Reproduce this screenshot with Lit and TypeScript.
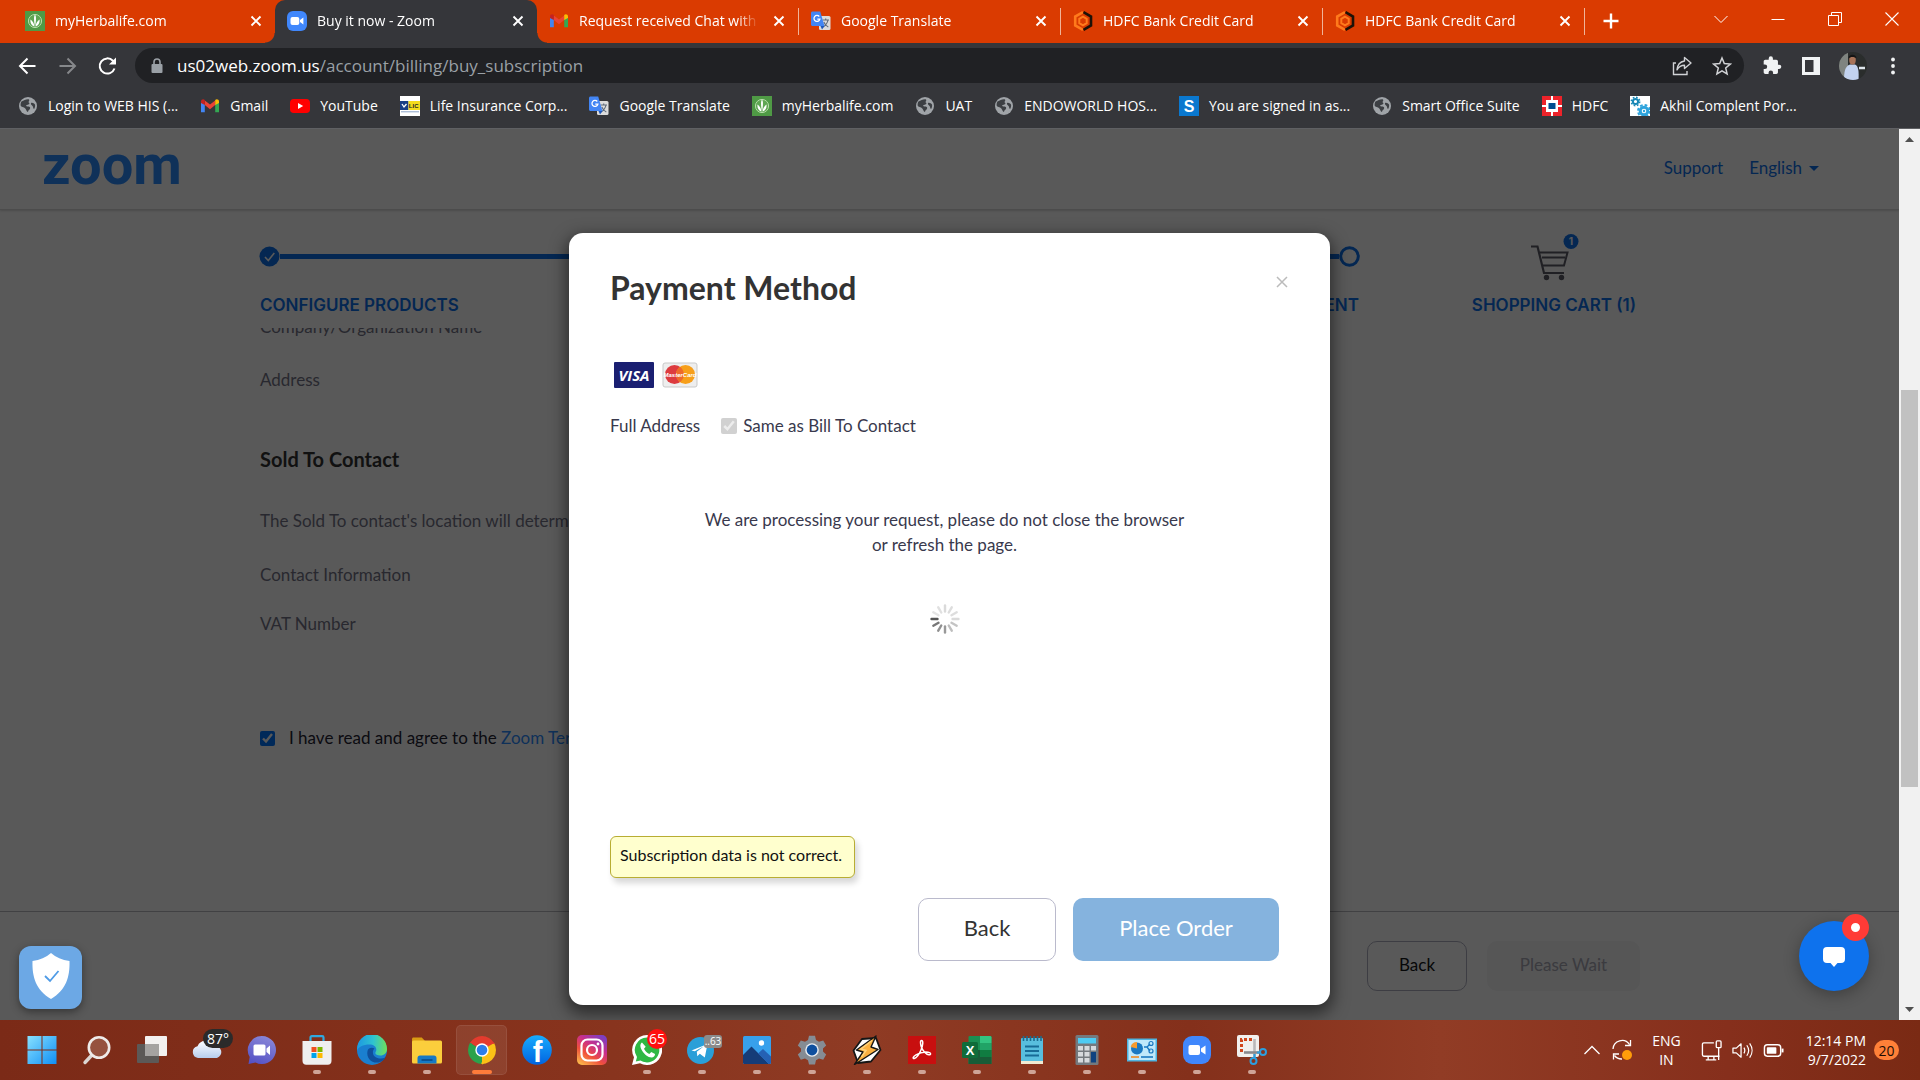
import { LitElement, html, svg, css, TemplateResult, SVGTemplateResult } from "lit";
import { customElement } from "lit/decorators.js";
import { classMap } from "lit/directives/class-map.js";

type Icon = TemplateResult | SVGTemplateResult;

const icon = (size: number, box: string, body: SVGTemplateResult): TemplateResult =>
  html`<svg width=${size} height=${size} viewBox=${box} fill="none" aria-hidden="true">${body}</svg>`;

/* ---------- site icons ---------- */

const herbalife = () => icon(20, "0 0 20 20", svg`
  <rect width="20" height="20" fill="#4f9a45"/>
  <circle cx="10" cy="10" r="6.600" fill="#5fa653" stroke="#b5dba8" stroke-width="1"/>
  <path d="M10 3.500c1.300 2 1.300 5 0 12.500c-1.300-7.500-1.300-10.500 0-12.500z" fill="#fff"/>
  <path d="M9.400 15.500C6.500 14.500 5 11.500 5.500 8.500C7.500 9.800 9 12 9.400 15.500zM10.600 15.500c2.900-1 4.400-4 3.900-7c-2 1.300-3.500 3.500-3.900 7z" fill="#fff"/>`);

const zoomCam = () => icon(20, "0 0 20 20", svg`
  <rect width="20" height="20" rx="6" fill="#4087fc"/>
  <rect x="3.500" y="6" width="8.800" height="8" rx="2" fill="#fff"/>
  <path d="M13 9l3.400-2.600v7.200L13 11z" fill="#fff"/>`);

const gmail = () => icon(20, "0 0 20 20", svg`
  <path d="M1 5v11.300h3.800V8.300z" fill="#4285f4"/>
  <path d="M19 5v11.300h-3.800V8.300z" fill="#34a853"/>
  <path d="M4.800 4.500L10 8.600l5.200-4.100v4.600L10 13.200L4.800 9.100z" fill="#ea4335"/>
  <path d="M1 5.600c0-2.200 2.300-3 3.800-1.700v5.200L1 6.900z" fill="#c5221f"/>
  <path d="M19 5.600c0-2.200-2.300-3-3.800-1.700v5.200L19 6.900z" fill="#fbbc04"/>`);

const translate = () => icon(20, "0 0 20 20", svg`
  <rect x="8" y="5" width="11.500" height="14" rx="1.500" fill="#dcdcdc"/>
  <path d="M11.500 9h6.500M14.700 7.500V9M17 9c-.6 3-2.500 5.500-5 7M12.800 11c.8 2 2.500 4 4.500 5" stroke="#5f6b7a" stroke-width="1.100"/>
  <path d="M1.500.5h7.700L13.500 15H1.500C.7 15 0 14.300 0 13.500V2C0 1.200.7.5 1.500.5z" fill="#4285f4"/>
  <path d="M9.500 15h4l-2.500 3.500z" fill="#1f57b8"/>
  <path d="M8.300 5.500A3 3 0 1 0 8.900 8.100H6.300" stroke="#fff" stroke-width="1.300"/>`);

const hexagon = () => icon(20, "0 0 20 20", svg`
  <path d="M10 1.200L2.200 5.500v9L10 18.800" stroke="#ff7a1c" stroke-width="2.600"/>
  <path d="M10.500 1.200L18 5.500v9l-7.500 4.300" stroke="#1d1208" stroke-width="2.600"/>
  <path d="M10 5.600L6.300 7.800v4.400l3.700 2.200l3.700-2.200V7.800z" stroke="#ff7a1c" stroke-width="2"/>`);

const globe = () => icon(20, "0 0 20 20", svg`
  <circle cx="10" cy="10" r="9" fill="#a0a4a8"/>
  <path d="M3.500 5.500C6 4.500 8 3 11 3.400c1 1.200-.8 2-.4 3.200c1.800.8.400 2.300-1.600 2.400c-1.500.1-1 1.500.5 1.500c2 0 3 .5 2.600 2c-.5 1.500-1.900 1.500-2.100 3.500c-1.600-.5-1.600-2.500-2.700-3.600C6 11 3 11 2.600 9.500c0-1.500.2-3 .9-4zM13 7c1.500-.6 3 .2 4 1.500c.4 1.700 0 3-.9 4.500c-1.300-.6-.6-2-1.600-3c-.8-.8-2-1.800-1.500-3z" fill="#3c3f43"/>`);

const youtube = () => icon(20, "0 0 20 20", svg`
  <rect x="0" y="3" width="20" height="14" rx="3.800" fill="#f00"/>
  <path d="M8 7l5.200 3L8 13z" fill="#fff"/>`);

const lic = () => icon(20, "0 0 20 20", svg`
  <rect width="20" height="20" fill="#fff"/>
  <rect y="5" width="8.500" height="9" fill="#1a3f86"/>
  <path d="M2 8l2 3l2.500-3" stroke="#fff" stroke-width="1.300"/>
  <rect x="8.500" y="5" width="11.500" height="9" fill="#f4dc1c"/>
  <text x="8.800" y="12" font-size="6" font-weight="700" font-family="Liberation Sans, sans-serif" fill="#222">LIC</text>
  <path d="M1 15.800h18" stroke="#8aa3c8" stroke-width="1"/>`);

const blueS = () => icon(20, "0 0 20 20", svg`
  <rect width="20" height="20" fill="#0a78cf"/>
  <text x="10" y="15.600" text-anchor="middle" font-size="16" font-weight="700" font-family="Liberation Sans, sans-serif" fill="#fff">S</text>`);

const hdfc = () => icon(20, "0 0 20 20", svg`
  <rect width="20" height="20" fill="#ed232a"/>
  <path d="M0 10h20M10 0v20" stroke="#fff" stroke-width="2"/>
  <rect x="4" y="4" width="12" height="12" fill="#fff"/>
  <rect x="6.500" y="7" width="7" height="6" fill="#004c8f"/>`);

const gears = () => icon(20, "0 0 20 20", svg`
  <rect width="20" height="20" fill="#fff"/>
  <circle cx="5.500" cy="5.500" r="2.600" stroke="#1787b5" stroke-width="2"/>
  <circle cx="5.500" cy="5.500" r="4.200" stroke="#1787b5" stroke-width="1.500" stroke-dasharray="1.700 1.600"/>
  <circle cx="14" cy="15" r="3.800" stroke="#2ea3dc" stroke-width="3"/>
  <circle cx="14" cy="15" r="6" stroke="#2ea3dc" stroke-width="2" stroke-dasharray="2.700 2"/>
  <circle cx="14" cy="15" r="1.200" fill="#2ea3dc"/>`);

/* ---------- taskbar icons ---------- */

const winLogo = () => icon(30, "0 0 30 30", svg`
  <defs><linearGradient id="win" x1="0" y1="0" x2="30" y2="30" gradientUnits="userSpaceOnUse">
    <stop stop-color="#8be3ff"/><stop offset="1" stop-color="#0c8cf5"/></linearGradient></defs>
  <path d="M.5 1h14v13.500H.5zM15.500 1h14v13.500h-14zM.5 15.500h14V29H.5zM15.500 15.500h14V29h-14z" fill="url(#win)"/>`);

const search = () => icon(30, "0 0 30 30", svg`
  <path d="M9.500 20.500L3 27.500" stroke="#dcd6d3" stroke-width="3.400" stroke-linecap="round"/>
  <circle cx="17" cy="12.500" r="10.200" fill="#96523f" stroke="#efebe9" stroke-width="2.600"/>`);

const taskView = () => icon(30, "0 0 30 30", svg`
  <rect x="8" y="1" width="22" height="20" rx="1" fill="#f3f1f0"/>
  <rect x="0" y="9" width="22" height="19" rx="1" fill="#5c5957"/>
  <rect x="8" y="9" width="14" height="12" fill="#a5a3a1"/>`);

const weather = () => icon(30, "0 0 30 30", svg`
  <defs><linearGradient id="cloud" x1="0" y1="8" x2="0" y2="24" gradientUnits="userSpaceOnUse">
    <stop stop-color="#f4f8ff"/><stop offset="1" stop-color="#b3c9ea"/></linearGradient></defs>
  <path d="M6 23a6 6 0 0 1-.5-11.800A9 9 0 0 1 22 11a6.200 6.200 0 0 1 3 12z" fill="url(#cloud)"/>`);

const teamsChat = () => icon(30, "0 0 30 30", svg`
  <defs><linearGradient id="chatBg" x1="20" y1="0" x2="8" y2="30" gradientUnits="userSpaceOnUse">
    <stop stop-color="#8a88d8"/><stop offset="1" stop-color="#5450c4"/></linearGradient></defs>
  <path d="M15 1a14 14 0 1 1-6.500 26.400L1.500 29l1.200-7A14 14 0 0 1 15 1z" fill="url(#chatBg)"/>
  <rect x="6.500" y="9.500" width="12" height="11" rx="1.500" fill="#fff"/>
  <path d="M19.500 13.500l3.500-3v9.500l-3.500-3z" fill="#fff"/>`);

const store = () => icon(30, "0 0 30 30", svg`
  <path d="M8.500 7V2.500c0-.8.5-1.300 1.300-1.300h10.400c.8 0 1.300.5 1.300 1.300V7" stroke="#2fa9df" stroke-width="2.200"/>
  <path d="M.5 6h29v20c0 2.200-1.500 3.700-3.700 3.700H4.200C2 29.700.5 28.200.5 26z" fill="#efefef"/>
  <path d="M9.500 12h5v5h-5z" fill="#f05022"/><path d="M15.500 12h5v5h-5z" fill="#7db700"/>
  <path d="M9.500 18h5v5h-5z" fill="#00a3ee"/><path d="M15.500 18h5v5h-5z" fill="#fdb900"/>`);

const edge = () => icon(30, "0 0 30 30", svg`
  <defs><linearGradient id="edgeTop" x1="2" y1="10" x2="30" y2="12" gradientUnits="userSpaceOnUse">
    <stop stop-color="#1f9de0"/><stop offset=".5" stop-color="#2fc3cf"/><stop offset="1" stop-color="#6fe05a"/></linearGradient></defs>
  <circle cx="15" cy="15" r="15" fill="#1a7fd0"/>
  <path d="M0 14A15 15 0 0 1 30 14c0 4-3 6.500-6.700 6.500c-3 0-5-1-5-2.500c0-1 1-1.600 1-3.500c0-3-3-5-6.800-5C6 9.500 1 12 0 16z" fill="url(#edgeTop)"/>
  <path d="M10.500 16c-1.500 7 4 12.500 11 11.500c3-.5 5.500-2.500 7-5c-5 2.500-11.500.5-12.500-4c-.5-2.500.5-4 1.500-5c-3-1.500-6.300-.5-7 2.500z" fill="#0f4f9c"/>`);

const explorer = () => icon(30, "0 0 30 30", svg`
  <path d="M0 4c0-1 .6-1.600 1.500-1.600h8.300L13 6v5H0z" fill="#d99b13"/>
  <rect y="5.500" width="30" height="23" rx="1.500" fill="#fbce3c"/>
  <path d="M5.500 28.500V23c0-1.500 1-2.500 2.500-2.500h14c1.500 0 2.500 1 2.500 2.500v5.500z" fill="#1679c5"/>
  <path d="M9.500 25h11" stroke="#0b4f8e" stroke-width="1.800"/>`);

const chrome = () => icon(30, "0 0 30 30", svg`
  <path d="M15 15L2.900 8A14 14 0 0 1 27.100 8z" fill="#e33b2e"/>
  <path d="M15 15L27.100 8A14 14 0 0 1 15 29z" fill="#fbc116"/>
  <path d="M15 15v14A14 14 0 0 1 2.900 8z" fill="#2ba24c"/>
  <path d="M15 8.300h12.300" stroke="#e33b2e" stroke-width="1"/>
  <path d="M20.800 18.500L15 29" stroke="#fbc116" stroke-width="2"/>
  <path d="M9.200 18.300L3.400 8.500" stroke="#2ba24c" stroke-width="2"/>
  <circle cx="15" cy="15" r="6.700" fill="#fff"/><circle cx="15" cy="15" r="5.300" fill="#2b7de9"/>`);

const facebook = () => icon(30, "0 0 30 30", svg`
  <defs><linearGradient id="fb" x1="0" y1="0" x2="0" y2="30" gradientUnits="userSpaceOnUse">
    <stop stop-color="#18acfe"/><stop offset="1" stop-color="#0163e0"/></linearGradient></defs>
  <circle cx="15" cy="15" r="14.800" fill="url(#fb)"/>
  <text x="15.500" y="27" text-anchor="middle" font-size="29" font-weight="700" font-family="Liberation Sans, sans-serif" fill="#fff">f</text>`);

const instagram = () => icon(30, "0 0 30 30", svg`
  <defs><linearGradient id="ig" x1="4" y1="30" x2="24" y2="0" gradientUnits="userSpaceOnUse">
    <stop stop-color="#fdbb4b"/><stop offset=".35" stop-color="#f0503c"/><stop offset=".65" stop-color="#c92f8b"/><stop offset="1" stop-color="#7a3fc4"/></linearGradient></defs>
  <rect width="30" height="30" rx="5" fill="url(#ig)"/>
  <rect x="4.500" y="4.500" width="21" height="21" rx="6" stroke="#fff" stroke-width="2.200"/>
  <circle cx="15" cy="15" r="5" stroke="#fff" stroke-width="2.200"/><circle cx="21" cy="9" r="1.400" fill="#fff"/>`);

const whatsapp = () => icon(30, "0 0 30 30", svg`
  <path d="M15 0a15 15 0 1 1-7 28.200L0 30l2-7.700A15 15 0 0 1 15 0z" fill="#fff"/>
  <path d="M15 2.600A12.400 12.400 0 1 1 8.500 25.600L3.800 26.600L5 22A12.400 12.400 0 0 1 15 2.600z" fill="#2fb843"/>
  <path d="M10 7.500c-2 1.500-2.300 4 0 8c2.500 4 6 7 9.500 7c2 0 3.500-1.500 3.500-3.500l-3.700-2l-2 2c-2.500-1-4.300-3-5.300-5.200l1.700-2z" fill="#fff"/>`);

const telegram = () => icon(30, "0 0 30 30", svg`
  <circle cx="13.500" cy="15.500" r="13.500" fill="#2a9fd8"/>
  <path d="M4.500 15.500L20.500 9l-2.700 13.500l-5-3.700l-2.500 2.500l-.5-4.500l7-5.500l-9 5z" fill="#fff"/>`);

const photos = () => icon(30, "0 0 30 30", svg`
  <rect x="1" y="1" width="28" height="28" rx="1.500" fill="#37a0ec"/>
  <path d="M1 20L9.500 11.500L27 29H2.500C1.600 29 1 28.400 1 27.500z" fill="#153c78"/>
  <path d="M16 18.500l5-4.500l8 7.500v6c0 .9-.6 1.500-1.500 1.500H27z" fill="#2561b4"/>
  <circle cx="19.500" cy="8" r="2.700" fill="#fff"/>`);

const settings = () => icon(30, "0 0 30 30", svg`
  <path d="M12 .8h6l1 4.200l3 1.700l4.200-1.300l3 5.200l-3.200 3v3l3.200 3l-3 5.200l-4.200-1.300l-3 1.700l-1 4.200h-6l-1-4.200l-3-1.700l-4.200 1.300l-3-5.200l3.200-3v-3l-3.200-3l3-5.200L8 6.700L11 5z" fill="#858c94"/>
  <circle cx="15" cy="15" r="6.800" fill="#e9edf1"/><circle cx="15" cy="15" r="5.400" fill="#0e4f9e"/>`);

const winamp = () => icon(30, "0 0 30 30", svg`
  <path d="M10 4l14-1l4.500 12L19 26.500L6 28L1.500 15.500z" fill="#fff" stroke="#161616" stroke-width="1.800" stroke-linejoin="round"/>
  <path d="M24 1L4.500 15l6.500 2L2.500 29.500L26 14.500l-7-2.500z" fill="#fbb040" stroke="#161616" stroke-width="1.400" stroke-linejoin="round"/>
  <path d="M20 5.500L9 14l5 1.500L9.500 22" stroke="#fdd27c" stroke-width="1.500"/>`);

const acrobat = () => icon(30, "0 0 30 30", svg`
  <rect x="1" y="1" width="28" height="28" fill="#c80f0f"/>
  <path d="M14.500 5.500c2 0 1.500 5-.5 9.500c-1.700 4-4.700 8-6.700 8.500c-2 .3-1.300-2 1.700-3.700c3.500-2 8.500-3 12-2.600c3.500.5 3.200 2.800.8 2.600c-3-.3-6.300-4.300-7.500-8c-.8-2.500-1.300-6.300.2-6.300z" stroke="#fff" stroke-width="1.500"/>`);

const excel = () => icon(30, "0 0 30 30", svg`
  <rect x="6.500" y="1" width="23" height="28" rx="1" fill="#1a8f52"/>
  <path d="M18 1h10.500l1 1v6H18z" fill="#33c481"/><path d="M18 8h11.500v7H18z" fill="#21a366"/>
  <path d="M18 15h11.500v7H18z" fill="#107c41"/><path d="M6.500 15H18v14H6.500z" fill="#185c37"/><path d="M18 22h11.500v7H18z" fill="#185c37"/>
  <rect x="0" y="7" width="16" height="16" rx="1.500" fill="#0f6c3a"/>
  <text x="8" y="19.500" text-anchor="middle" font-size="13" font-weight="700" font-family="Liberation Sans, sans-serif" fill="#fff">X</text>`);

const notepad = () => icon(30, "0 0 30 30", svg`
  <rect x="4" y="3" width="22" height="26" rx="1" fill="#58bede"/><rect x="4" y="26" width="22" height="3" fill="#f2ead2"/>
  <path d="M6.500 1v5M10 1v5M13.500 1v5M17 1v5M20.500 1v5M24 1v5" stroke="#1c6c8f" stroke-width="1.600"/>
  <path d="M8 11.500h14M8 16h14M8 20.500h14" stroke="#176b96" stroke-width="2"/>`);

const calculator = () => icon(30, "0 0 30 30", svg`
  <rect x="3.500" y="0" width="23" height="30" rx="1.500" fill="#74797e"/>
  <rect x="6" y="3" width="18" height="5.500" fill="#4ecbf3"/>
  <path d="M6 11h5v4.500H6zM12.500 11h5v4.500h-5zM19 11h5v4.500h-5zM6 17h5v4.500H6zM12.500 17h5v4.500h-5zM6 23h5v4.500H6zM12.500 23h5v4.500h-5z" fill="#d6d9dc"/>
  <path d="M19 17h5v10.500h-5z" fill="#10427f"/>`);

const controlPanel = () => icon(30, "0 0 30 30", svg`
  <rect x="0" y="3.500" width="30" height="23" fill="#4fb4e0"/><rect x="1.500" y="5" width="27" height="20" fill="#bfe8fb"/>
  <circle cx="10" cy="13.500" r="6" fill="#1a78c2"/><path d="M10 13.500V7a6.500 6.500 0 0 0-6.300 5z" fill="#f79b2e"/>
  <path d="M17 12h3l3-3M20 12l3 4" stroke="#1a78c2" stroke-width="1.300"/>
  <circle cx="24" cy="8.500" r="2" stroke="#1a78c2" stroke-width="1.200"/><circle cx="24" cy="16" r="2" stroke="#1a78c2" stroke-width="1.200"/>
  <path d="M4 22h8" stroke="#f08a24" stroke-width="1.600"/><path d="M14 22h12" stroke="#1a78c2" stroke-width="1.600"/>`);

const zoomApp = () => icon(30, "0 0 30 30", svg`
  <rect x="1" y="1" width="28" height="28" rx="9" fill="#4087fc"/>
  <rect x="6.500" y="10" width="11.500" height="10" rx="2" fill="#fff"/><path d="M19 13.500l4.500-3v9l-4.500-3z" fill="#fff"/>`);

const snip = () => icon(30, "0 0 30 30", svg`
  <rect x="0" y="0" width="22" height="22" rx="2" fill="#f1f0ee"/>
  <path d="M4.500 17V4.500H17" stroke="#d0451b" stroke-width="3" stroke-dasharray="3 2"/>
  <path d="M17.500 4v18" stroke="#b9b9bb" stroke-width="2.600"/><path d="M7 17.500h15" stroke="#88898d" stroke-width="2.600"/>
  <circle cx="26" cy="17" r="3" stroke="#2c9fdf" stroke-width="2"/><circle cx="16.500" cy="26" r="3" stroke="#2c9fdf" stroke-width="2"/>
  <path d="M17.500 19v4M20 17.500h3" stroke="#2c9fdf" stroke-width="2.200"/>`);

/* ---------- data ---------- */

interface Tab { label: string; icon: () => Icon; active?: boolean; rule?: boolean }
const TABS: Tab[] = [
  { label: "myHerbalife.com", icon: herbalife },
  { label: "Buy it now - Zoom", icon: zoomCam, active: true },
  { label: "Request received Chat with", icon: gmail, rule: true },
  { label: "Google Translate", icon: translate, rule: true },
  { label: "HDFC Bank Credit Card", icon: hexagon, rule: true },
  { label: "HDFC Bank Credit Card", icon: hexagon, rule: true },
];

const BOOKMARKS: { label: string; icon: () => Icon }[] = [
  { label: "Login to WEB HIS (...", icon: globe },
  { label: "Gmail", icon: gmail },
  { label: "YouTube", icon: youtube },
  { label: "Life Insurance Corp...", icon: lic },
  { label: "Google Translate", icon: translate },
  { label: "myHerbalife.com", icon: herbalife },
  { label: "UAT", icon: globe },
  { label: "ENDOWORLD HOS...", icon: globe },
  { label: "You are signed in as...", icon: blueS },
  { label: "Smart Office Suite", icon: globe },
  { label: "HDFC", icon: hdfc },
  { label: "Akhil Complent Por...", icon: gears },
];

interface App { name: string; icon: () => Icon; open?: boolean; current?: boolean; badge?: string; kind?: string }
const APPS: App[] = [
  { name: "Start", icon: winLogo },
  { name: "Search", icon: search },
  { name: "Task view", icon: taskView },
  { name: "Weather", icon: weather, badge: "87°", kind: "temp" },
  { name: "Chat", icon: teamsChat },
  { name: "Store", icon: store, open: true },
  { name: "Edge", icon: edge, open: true },
  { name: "File Explorer", icon: explorer, open: true },
  { name: "Chrome", icon: chrome, current: true },
  { name: "Facebook", icon: facebook },
  { name: "Instagram", icon: instagram },
  { name: "WhatsApp", icon: whatsapp, open: true, badge: "65", kind: "alert" },
  { name: "Telegram", icon: telegram, open: true, badge: "..63", kind: "muted" },
  { name: "Photos", icon: photos, open: true },
  { name: "Settings", icon: settings, open: true },
  { name: "Winamp", icon: winamp, open: true },
  { name: "Acrobat", icon: acrobat, open: true },
  { name: "Excel", icon: excel, open: true },
  { name: "Notepad", icon: notepad, open: true },
  { name: "Calculator", icon: calculator, open: true },
  { name: "Control Panel", icon: controlPanel, open: true },
  { name: "Zoom", icon: zoomApp, open: true },
  { name: "Snipping Tool", icon: snip, open: true },
];

const reset = css`
  *, *::before, *::after { box-sizing: border-box; }
  button { font: inherit; color: inherit; background: none; border: 0; padding: 0; cursor: pointer; }
  a { color: inherit; text-decoration: none; }
  h1, h2, p, ul { margin: 0; padding: 0; font-weight: inherit; font-size: inherit; list-style: none; }
  svg { display: block; flex: none; }
`;

/* ---------- browser chrome ---------- */

@customElement("browser-bar")
export class BrowserBar extends LitElement {
  static styles = [reset, css`
    :host { display: block; font: 14px/20px "Open Sans", "Noto Sans", sans-serif; color: #fff; background: #35363a; }
    .strip { display: flex; height: 43px; padding-left: 13px; background: #da3b01; }
    .tab { position: relative; flex: 0 1 262px; min-width: 0; display: flex; align-items: center; gap: 10px; padding: 0 9px 2px 12px; }
    .tab .name { flex: 1; min-width: 0; overflow: hidden; white-space: nowrap; mask-image: linear-gradient(90deg, #000 88%, transparent); }
    .tab .shut { display: grid; place-items: center; width: 20px; height: 20px; }
    .tab.rule { border-right: 1px solid transparent; border-image: linear-gradient(transparent 9px, #f0b49a 9px 34px, transparent 34px) 1; }
    .tab.active { background: #35363a; border-radius: 10px 10px 0 0; }
    .tab.active::before, .tab.active::after { content: ""; position: absolute; bottom: 0; width: 10px; height: 10px; }
    .tab.active::before { left: -10px; background: radial-gradient(circle at 0 0, transparent 9px, #35363a 10px); }
    .tab.active::after { right: -10px; background: radial-gradient(circle at 100% 0, transparent 9px, #35363a 10px); }
    .add { display: grid; place-items: center; width: 52px; padding-bottom: 2px; }
    .window { display: flex; margin-left: auto; height: 37px; }
    .window button { display: grid; place-items: center; width: 57px; }
    .tools { display: flex; align-items: center; height: 45px; padding: 0 17px; }
    .nav { display: flex; gap: 20px; width: 118px; }
    .address { position: relative; flex: 1; display: flex; align-items: center; height: 35px; padding: 0 12px; border-radius: 18px; background: #202124; font-size: 17px; }
    .address .lock { margin-right: 10px; }
    .address .path { color: #9aa0a6; flex: 1; }
    .address input { position: absolute; inset: 0 80px 0 40px; border: 0; background: transparent; outline: 0; }
    .address .acts { display: flex; gap: 20px; }
    .ext { display: flex; align-items: center; gap: 16px; margin-left: 15px; }
    .marks { display: flex; gap: 22px; height: 41px; padding: 0 18px 4px; align-items: center; border-bottom: 1px solid #5f6063; }
    .marks a { display: flex; align-items: center; gap: 10px; white-space: nowrap; }
  `];

  render() {
    return html`
      <div class="strip" role="tablist">
        ${TABS.map((t) => html`
          <div class=${classMap({ tab: true, active: !!t.active, rule: !!t.rule })} role="tab" aria-selected=${t.active ? "true" : "false"}>
            ${t.icon()}<span class="name">${t.label}</span>
            <button class="shut" aria-label="Close tab">${icon(12, "0 0 12 12", svg`<path d="M1.500 1.500l9 9M10.500 1.500l-9 9" stroke="#fff" stroke-width="1.900"/>`)}</button>
          </div>`)}
        <button class="add" aria-label="New tab">${icon(16, "0 0 16 16", svg`<path d="M8 .5v15M.5 8h15" stroke="#fff" stroke-width="2.400"/>`)}</button>
        <div class="window">
          <button aria-label="Search tabs">${icon(14, "0 0 14 14", svg`<path d="M.5 4L7 10.500L13.500 4" stroke="#fff" stroke-width="1"/>`)}</button>
          <button aria-label="Minimize">${icon(14, "0 0 14 14", svg`<path d="M.5 7.500h13" stroke="#fff" stroke-width="1"/>`)}</button>
          <button aria-label="Restore">${icon(14, "0 0 14 14", svg`<path d="M.5 3.500h10v10H.5zM3.500 3.500v-3h10v10h-3" stroke="#fff" stroke-width="1"/>`)}</button>
          <button aria-label="Close window">${icon(14, "0 0 14 14", svg`<path d="M.5.5l13 13M13.500.5l-13 13" stroke="#fff" stroke-width="1.100"/>`)}</button>
        </div>
      </div>
      <div class="tools">
        <nav class="nav">
          <button aria-label="Back">${icon(20, "0 0 20 20", svg`<path d="M18.500 10H3M10.500 2.500L3 10l7.500 7.500" stroke="#fff" stroke-width="2"/>`)}</button>
          <button aria-label="Forward">${icon(20, "0 0 20 20", svg`<path d="M2.500 10h15M10.500 2.500l7.500 7.500l-7.500 7.500" stroke="#86888b" stroke-width="2"/>`)}</button>
          <button aria-label="Reload">${icon(20, "0 0 20 20", svg`<path d="M17.500 12.500A7.600 7.600 0 1 1 15.900 4.800L17.500 6.500" stroke="#fff" stroke-width="2"/><path d="M19 1.500V8.500h-7z" fill="#fff"/>`)}</button>
        </nav>
        <div class="address">
          <span class="lock">${icon(20, "0 0 20 20", svg`<rect x="4.500" y="8" width="11" height="9" rx="1" fill="#9aa0a6"/><path d="M7 8.500V6a3 3 0 0 1 6 0v2.500" stroke="#9aa0a6" stroke-width="1.600"/>`)}</span>
          <span>us02web.zoom.us</span><span class="path">/account/billing/buy_subscription</span>
          <input type="text" aria-label="Address bar">
          <span class="acts">
            <button aria-label="Share">${icon(20, "0 0 20 20", svg`<path d="M4 7H1.500v11.500h13.500V15" stroke="#d0d2d5" stroke-width="1.400"/><path d="M12.500 1.500l6.500 5.500l-6.500 5.500V9.300c-3.500 0-5.500 1.300-7.500 4.500c.4-5 3-8 7.500-8.800z" stroke="#d0d2d5" stroke-width="1.400" stroke-linejoin="round"/>`)}</button>
            <button aria-label="Bookmark">${icon(20, "0 0 20 20", svg`<path d="M10 2l2.300 5.600l6 .5l-4.600 3.900l1.400 5.900L10 14.800l-5.100 3.100L6.300 12L1.700 8.100l6-.5z" stroke="#d0d2d5" stroke-width="1.500"/>`)}</button>
          </span>
        </div>
        <div class="ext">
          <button aria-label="Extensions">${icon(24, "0 0 24 24", svg`<path d="M20.500 11H19V7c0-1.100-.9-2-2-2h-4V3.500a2.500 2.500 0 0 0-5 0V5H4c-1.100 0-2 .9-2 2v3.800h1.500a2.700 2.700 0 0 1 0 5.400H2V20c0 1.100.9 2 2 2h3.800v-1.500a2.700 2.700 0 0 1 5.400 0V22H17c1.100 0 2-.9 2-2v-4h1.500a2.500 2.500 0 0 0 0-5z" fill="#f1f3f4" transform="translate(3 1.500) scale(.84)"/>`)}</button>
          <button aria-label="Side panel">${icon(24, "0 0 24 24", svg`<path d="M4.500 4.500h15v15h-15z" stroke="#f1f3f4" stroke-width="3"/><path d="M14.500 4h5.500v16h-5.500z" fill="#f1f3f4"/>`)}</button>
          <button aria-label="Profile">${icon(28, "0 0 28 28", svg`
            <defs><clipPath id="face"><circle cx="14" cy="14" r="14"/></clipPath></defs>
            <g clip-path="url(#face)"><rect width="28" height="28" fill="#2a2d2c"/><rect width="9" height="28" fill="#7f8480"/>
            <path d="M5 28c0-8 1-14 6-15.500h5c3.500 1 4 8 3.500 15.500z" fill="#c3d3ef"/><ellipse cx="13.500" cy="8" rx="3.300" ry="4.500" fill="#a87358"/>
            <path d="M9.500 6.500c0-5 8-5 8 0c-2-2-6-2-8 0z" fill="#151515"/><path d="M20 16h6" stroke="#dfe6ec" stroke-width="2.500"/></g>`)}</button>
          <button aria-label="Menu">${icon(20, "0 0 20 20", svg`<circle cx="10" cy="3.500" r="1.900" fill="#f1f3f4"/><circle cx="10" cy="10" r="1.900" fill="#f1f3f4"/><circle cx="10" cy="16.500" r="1.900" fill="#f1f3f4"/>`)}</button>
        </div>
      </div>
      <nav class="marks">${BOOKMARKS.map((b) => html`<a href="#">${b.icon()}<span>${b.label}</span></a>`)}</nav>`;
  }
}

/* ---------- billing page ---------- */

@customElement("billing-page")
export class BillingPage extends LitElement {
  static styles = [reset, css`
    :host { position: relative; display: flex; flex-direction: column; flex: 1; min-width: 0; overflow: hidden; background: #fff; color: #747487; font: 17px/24px Lato, "Open Sans", sans-serif; }
    .head { display: flex; align-items: center; height: 81px; padding: 0 80px 2px 42px; border-bottom: 1px solid #dadada; box-shadow: 0 1px 2px #d5d5d5; color: #0e71eb; }
    .logo { font: 700 56px/60px Roboto, sans-serif; color: #2d8cff; margin: 0 auto 6px 0; }
    .head .lang { display: flex; align-items: center; gap: 7px; margin-left: 26px; }
    .steps { display: flex; gap: 110px; height: 118px; padding: 0 260px; font: 600 17px/24px Inter, sans-serif; color: #0e71eb; }
    .flow { flex: 1; padding-top: 36px; }
    .track { display: flex; align-items: center; height: 21px; margin: 0 -1px; }
    .track .bar { flex: 1; height: 5px; background: #0e71eb; }
    .names { display: flex; justify-content: space-between; margin-top: 26px; }
    .cart { display: flex; flex-direction: column; align-items: center; min-width: 170px; padding-top: 23px; gap: 12px; white-space: nowrap; }
    .form { flex: 1; min-height: 0; overflow: hidden; padding: 0 260px; }
    .fields { display: flex; flex-direction: column; margin-top: -13px; }
    .fields .addr { margin-top: 29px; }
    .fields h2 { margin-top: 55px; font-size: 20px; font-weight: 700; color: #333; }
    .fields .note { margin-top: 38px; }
    .fields .info { margin-top: 30px; }
    .fields .vat { margin-top: 25px; }
    .agree { display: flex; align-items: center; margin-top: 90px; color: #232333; white-space: pre; }
    .agree input { width: 15px; height: 15px; margin: 0 14px 0 0; accent-color: #0075ff; }
    .agree a { color: #2d8cff; }
    .foot { display: flex; justify-content: flex-end; align-items: flex-start; gap: 20px; height: 109px; padding: 29px 259px 0; border-top: 1px solid #b9b9c0; }
    .foot button { height: 50px; padding-bottom: 2px; border-radius: 10px; }
    .foot .back { width: 100px; border: 1px solid #b0b0c0; color: #131619; }
    .foot .wait { width: 153px; background: #f5f5f7; color: #a8a8b4; }
    .veil { position: absolute; inset: 0; display: flex; justify-content: center; align-items: flex-start; padding-top: 104px; background: rgba(0, 0, 0, .65); }
    .modal { display: flex; flex-direction: column; flex: 0 1 761px; min-height: 772px; padding: 35px 51px 44px 41px; border-radius: 14px; background: #fff; color: #39394d; box-shadow: 0 6px 16px 3px rgba(0, 0, 0, .5); }
    .title { display: flex; justify-content: space-between; }
    .title h1 { font-size: 32px; line-height: 40px; font-weight: 700; color: #333; }
    .title button { display: grid; place-items: center; width: 20px; height: 28px; margin-right: -13px; }
    .cards { display: flex; gap: 8px; margin: 54px 0 0 4px; }
    .same { display: flex; align-items: center; gap: 21px; margin-top: 26px; }
    .same label { display: flex; align-items: center; gap: 6px; }
    .same input { width: 16px; height: 16px; margin: 0; }
    .busy { margin-top: 69px; text-align: center; line-height: 25px; }
    .spin { align-self: center; margin-top: 47px; }
    .tip { align-self: flex-start; margin-top: auto; padding: 6px 9px; width: 245px; height: 42px; border: 1px solid #b8ad33; border-radius: 6px; background: #ffffce; color: #111; font-size: 16px; white-space: nowrap; box-shadow: 3px 5px 6px rgba(0, 0, 0, .16); }
    .acts { display: flex; justify-content: flex-end; gap: 17px; margin-top: 20px; font-size: 22px; }
    .acts button { height: 63px; padding-bottom: 4px; border-radius: 10px; }
    .acts .back { width: 138px; border: 1px solid #babacc; color: #333; }
    .acts .order { width: 206px; background: #85b3de; color: #fff; }
    .shield { position: absolute; left: 19px; bottom: 11px; width: 63px; height: 63px; padding-bottom: 4px; border-radius: 12px; background: #6ca8e5; box-shadow: 0 3px 8px rgba(0, 0, 0, .4); display: grid; place-items: center; }
    .chat { position: absolute; right: 30px; bottom: 29px; width: 70px; height: 70px; border-radius: 50%; background: #0e72ed; box-shadow: 0 4px 16px rgba(0, 0, 0, .3); display: grid; place-items: center; }
    .ping { position: absolute; top: -7px; right: 0; width: 27px; height: 27px; border-radius: 50%; border: 9px solid #ff3b36; background: #fff; }
  `];

  private spinner() {
    const fades = [.22, .2, .2, .22, .35, .38, .6, .65, .8, 1, .16, .18];
    return icon(30, "0 0 30 30", svg`${[...Array(12).keys()].map((i) => svg`
      <path d="M15 1.500v6" stroke="#555" stroke-width="2.400" stroke-linecap="round" opacity=${fades[i]} transform="rotate(${i * 30} 15 15)"/>`)}`);
  }

  render() {
    return html`
      <header class="head">
        <a class="logo" href="#">zoom</a>
        <a href="#">Support</a>
        <a class="lang" href="#">English ${icon(10, "0 0 10 10", svg`<path d="M0 3h10L5 8z" fill="#0e71eb"/>`)}</a>
      </header>
      <section class="steps">
        <div class="flow">
          <div class="track">
            ${icon(21, "0 0 21 21", svg`<circle cx="10.500" cy="10.500" r="10" fill="#0e71eb"/><path d="M6 11l3.300 3.500l6-7.500" stroke="#fff" stroke-width="1.600"/>`)}
            <span class="bar"></span>
            ${icon(21, "0 0 21 21", svg`<circle cx="10.500" cy="10.500" r="8.800" stroke="#0e71eb" stroke-width="3"/>`)}
          </div>
          <div class="names"><span>CONFIGURE PRODUCTS</span><span>PAYMENT</span></div>
        </div>
        <div class="cart">
          <svg width="50" height="48" viewBox="0 0 50 48" fill="none" aria-hidden="true">
            <path d="M2 13.500h6.500l6.500 26.500h20" stroke="#5d5d68" stroke-width="2.200"/>
            <path d="M10.500 19.500h28l-3.500 13H14M13 24.500h23" stroke="#5d5d68" stroke-width="2"/>
            <circle cx="17.500" cy="44.500" r="2.700" fill="#5d5d68"/><circle cx="32.500" cy="44.500" r="2.700" fill="#5d5d68"/>
            <circle cx="42" cy="8.500" r="7.500" fill="#0e71eb"/>
            <text x="42" y="12" text-anchor="middle" font-size="10" font-weight="700" font-family="Inter, sans-serif" fill="#fff">1</text>
          </svg>
          <a href="#">SHOPPING CART (1)</a>
        </div>
      </section>
      <main class="form"><div class="fields">
        <p>Company/Organization Name</p>
        <p class="addr">Address</p>
        <h2>Sold To Contact</h2>
        <p class="note">The Sold To contact's location will determine</p>
        <p class="info">Contact Information</p>
        <p class="vat">VAT Number</p>
        <div class="agree"><input id="agree" type="checkbox" checked><label for="agree">I have read and agree to the </label><a href="#">Zoom Terms</a></div>
      </div></main>
      <footer class="foot"><button class="back">Back</button><button class="wait" disabled>Please Wait</button></footer>

      <div class="veil">
        <section class="modal" role="dialog" aria-label="Payment Method">
          <div class="title"><h1>Payment Method</h1>
            <button aria-label="Close">${icon(12, "0 0 12 12", svg`<path d="M1 1l10 10M11 1L1 11" stroke="#bbb" stroke-width="1.500"/>`)}</button></div>
          <div class="cards">
            <svg width="40" height="26" viewBox="0 0 40 26" aria-hidden="true"><rect width="40" height="26" rx="1" fill="#1a1f71"/>
              <text x="20" y="18.500" text-anchor="middle" font-size="15" font-weight="700" font-style="italic" font-family="Open Sans, sans-serif" fill="#fff">VISA</text></svg>
            <svg width="36" height="26" viewBox="0 0 36 26" aria-hidden="true"><rect x="1" y="1" width="34" height="24" rx="2" fill="#eee" stroke="#c9c9c9"/>
              <circle cx="12.500" cy="12.500" r="9.500" fill="#dd3b3f"/><circle cx="23.500" cy="12.500" r="9.500" fill="#f79f1a"/>
              <path d="M18 4.800a9.500 9.500 0 0 1 0 15.400a9.500 9.500 0 0 1 0-15.400z" fill="#ee6a2b"/>
              <text x="18" y="15" text-anchor="middle" font-size="6" font-weight="700" font-style="italic" font-family="Liberation Sans, sans-serif" fill="#fff">MasterCard</text></svg>
          </div>
          <div class="same"><span>Full Address</span><label><input type="checkbox" checked disabled>Same as Bill To Contact</label></div>
          <p class="busy">We are processing your request, please do not close the browser<br>or refresh the page.</p>
          <div class="spin">${this.spinner()}</div>
          <div class="tip" role="alert">Subscription data is not correct.</div>
          <div class="acts"><button class="back">Back</button><button class="order">Place Order</button></div>
        </section>
      </div>
      <button class="shield" aria-label="Site protection">
        <svg width="38" height="48" viewBox="0 0 38 48" fill="none" aria-hidden="true"><path d="M19 1c5 4.500 11 7 18.500 8c.5 16-3.500 29-18.500 38C4 38 0 25 .5 9C8 8 14 5.500 19 1z" fill="#fff"/><path d="M13 24l5 5l8.500-10" stroke="#4f9be6" stroke-width="1.800"/></svg>
      </button>
      <button class="chat" aria-label="Chat">
        <svg width="24" height="24" viewBox="0 0 24 24" aria-hidden="true"><path d="M5 3h14a4 4 0 0 1 4 4v8a4 4 0 0 1-4 4h-3.500L12 23l-3.500-4H5a4 4 0 0 1-4-4V7a4 4 0 0 1 4-4z" fill="#fff"/></svg>
        <span class="ping"></span>
      </button>`;
  }
}

/* ---------- taskbar ---------- */

@customElement("task-bar")
export class TaskBar extends LitElement {
  static styles = [reset, css`
    :host { display: flex; align-items: center; height: 60px; padding: 0 21px 0 14px; color: #fff; font: 14px/19px "Open Sans", "Noto Sans", sans-serif; background: linear-gradient(90deg, #7b2a17, #87331d 30%, #8f3b24 45%, #84301b 62%, #913c25 75%, #862f1c 90%, #7a2a14); }
    .app { position: relative; display: grid; place-items: center; width: 55px; height: 60px; }
    .app.current::before { content: ""; position: absolute; inset: 5px 2px; border-radius: 5px; border: 1px solid rgba(255, 255, 255, .08); background: rgba(255, 255, 255, .08); }
    .app.open::after, .app.current::after { content: ""; position: absolute; bottom: 6px; width: 8px; height: 4px; border-radius: 2px; background: #cfa497; }
    .app.current::after { width: 20px; background: #ff7b3a; }
    .app svg { position: relative; }
    .badge { position: absolute; z-index: 1; }
    .temp { left: 24px; top: 9px; padding: 0 4px; border-radius: 10px; background: #2b2a2a; line-height: 19px; }
    .alert { left: 28px; top: 9px; min-width: 20px; border-radius: 10px; background: #ff1010; line-height: 20px; }
    .muted { left: 30px; top: 15px; width: 18px; border-radius: 3px; background: #8b8b8b; font-size: 10px; line-height: 13px; }
    .tray { display: flex; align-items: center; gap: 10px; margin-left: auto; }
    .lang { text-align: center; margin: 0 10px 0 9px; }
    .clock { text-align: right; margin: 0 -2px 0 12px; }
    .count { display: grid; place-items: center; width: 25px; height: 20px; border-radius: 10px; background: #ff8038; color: #1d0d05; font-size: 14px; }
  `];

  render() {
    return html`
      ${APPS.map((a) => html`
        <button class=${classMap({ app: true, open: !!a.open, current: !!a.current })} aria-label=${a.name}>
          ${a.icon()}${a.badge ? html`<span class="badge ${a.kind}">${a.badge}</span>` : null}
        </button>`)}
      <div class="tray">
        ${icon(18, "0 0 18 18", svg`<path d="M1.500 13L9 5.500l7.500 7.500" stroke="#fff" stroke-width="1.300"/>`)}
        ${icon(22, "0 0 22 22", svg`<path d="M2 10a9 9 0 0 1 16.500-4.500M19.500 1v5.500H14M2.500 20.500V15H8M3.500 16.500A9 9 0 0 0 11 20" stroke="#fff" stroke-width="1.300"/><circle cx="16" cy="16" r="5" fill="#ff9d0a"/>`)}
        <span class="lang">ENG<br>IN</span>
        ${icon(21, "0 0 22 22", svg`<path d="M13.500 3H3c-1 0-1.500.5-1.500 1.500v11c0 1 .5 1.500 1.500 1.500h16.500M7.500 17v3.500M13.500 17v3.500M5 20.800h11M18.500 8.500v12.500" stroke="#fff" stroke-width="1.400"/><rect x="16" y="1" width="5" height="7" rx="1" stroke="#fff" stroke-width="1.400"/>`)}
        ${icon(21, "0 0 22 22", svg`<path d="M1 8.500h3.500L9.500 4v14l-5-4.500H1z" stroke="#fff" stroke-width="1.300" stroke-linejoin="round"/><path d="M12.500 8c1.200 2 1.200 4 0 6M15.500 5.500c2.500 3.500 2.500 7.500 0 11M18.500 3.500c3.300 4.500 3.300 10.500 0 15" stroke="#fff" stroke-width="1.300"/>`)}
        ${icon(21, "0 0 22 22", svg`<rect x="1.500" y="5" width="17" height="12" rx="3" stroke="#fff" stroke-width="1.500"/><rect x="4" y="7.500" width="10" height="7" rx="1" fill="#fff"/><path d="M20.500 9v4" stroke="#fff" stroke-width="2"/>`)}
        <span class="clock">12:14 PM<br>9/7/2022</span>
        <span class="count">20</span>
      </div>`;
  }
}

@customElement("app-root")
export class AppRoot extends LitElement {
  static styles = [reset, css`
    :host { display: flex; flex-direction: column; min-height: 100vh; }
    .view { display: flex; flex: 1; }
    .scroll { display: flex; flex-direction: column; width: 21px; background: #f1f1f1; }
    .scroll button { display: grid; place-items: center; height: 21px; }
    .scroll .before { flex: 240; }
    .scroll .thumb { flex: 397; margin: 0 2px; background: #c1c1c1; }
    .scroll .after { flex: 212; }
  `];

  render() {
    return html`
      <browser-bar></browser-bar>
      <div class="view">
        <billing-page></billing-page>
        <div class="scroll">
          <button aria-label="Scroll up">${icon(9, "0 0 9 9", svg`<path d="M0 7h9L4.500 2z" fill="#505050"/>`)}</button>
          <span class="before"></span><span class="thumb"></span><span class="after"></span>
          <button aria-label="Scroll down">${icon(9, "0 0 9 9", svg`<path d="M0 2h9L4.500 7z" fill="#505050"/>`)}</button>
        </div>
      </div>
      <task-bar></task-bar>`;
  }
}
